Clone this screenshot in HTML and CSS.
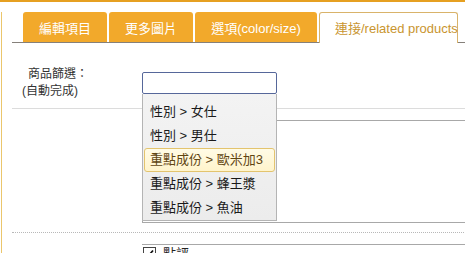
FILE: index.html
```html
<!DOCTYPE html>
<html lang="zh-Hant">
<head>
<meta charset="utf-8">
<title>連接/related products</title>
<link rel="stylesheet" href="styles.css">
</head>
<body>
<div class="page">
  <div class="tabs">
    <div class="tab tab-edit">編輯項目</div>
    <div class="tab tab-photos">更多圖片</div>
    <div class="tab tab-options">選項(color/size)</div>
    <div class="tab tab-related active">連接/related products</div>
  </div>

  <div class="row row-search">
    <div class="label"><span class="label-line first">商品篩選：</span><span class="label-line">(自動完成)</span></div>
    <div class="field">
      <div class="ac">
        <input class="ac-input" type="text">
        <ul class="ac-menu">
          <li class="ac-item">性別 &gt; 女仕</li>
          <li class="ac-item">性別 &gt; 男仕</li>
          <li class="ac-item hover">重點成份 &gt; 歐米加3</li>
          <li class="ac-item">重點成份 &gt; 蜂王漿</li>
          <li class="ac-item">重點成份 &gt; 魚油</li>
        </ul>
      </div>
    </div>
  </div>

  <div class="row row-list">
    <div class="label"></div>
    <div class="field"><div class="listbox"></div></div>
  </div>

  <div class="row row-check">
    <div class="label"></div>
    <div class="field">
      <div class="check-box">
        <span class="cb"><svg width="11" height="11" viewBox="0 0 11 11"><path d="M2 5.5 L4.3 8 L9 2.5" fill="none" stroke="#111" stroke-width="1.8"/></svg></span>
        <span class="cb-text">點評</span>
      </div>
    </div>
  </div>
</div>
</body>
</html>
```

FILE: styles.css
```css
html, body {
  margin: 0;
  padding: 0;
  overflow: hidden;
  background: #fff;
}
body {
  border-top: 2px solid #e6a021;
  font-family: "Liberation Sans", "Noto Sans CJK TC", sans-serif;
  color: #222;
}
.page {
  margin-left: 1px;
  border-left: 1px solid #ebc66c;
  min-height: 260px;
  width: 600px;
}
.tabs {
  display: flex;
  gap: 2px;
  margin: 10px 0 0 10px;
  padding-left: 11px;
  border-bottom: 1px solid #85807a;
  height: 30px;
}
.tab {
  box-sizing: border-box;
  height: 30px;
  padding-top: 4px;
  line-height: 26px;
  font-size: 13px;
  color: #fff;
  background: #f2a92b;
  border-radius: 3px 3px 0 0;
  text-align: center;
  white-space: nowrap;
}
.tab-edit { width: 84px; }
.tab-photos { width: 84px; }
.tab-options { width: 122px; }
.tab-related { width: 139px; }
.tab.active {
  height: 31px;
  background: #fff;
  color: #c9952f;
  border: 1px solid #d9b36a;
  border-bottom: none;
  padding-top: 3px;
  padding-left: 15px;
  text-align: left;
}
.row {
  display: flex;
  margin-left: 10px;
}
.label {
  width: 130px;
  flex: none;
  font-size: 12px;
  line-height: 17px;
  color: #333;
  padding-left: 10px;
  box-sizing: border-box;
}
.label-line { display: block; }
.label-line.first { padding-left: 6px; }
.field { flex: none; }
.row-search {
  padding: 23px 0 8px;
  border-bottom: 1px solid #dcdcdc;
}
.ac { position: relative; margin-top: 6px; }
.ac-input {
  display: block;
  box-sizing: border-box;
  width: 135px;
  height: 22px;
  margin: 0;
  border: 1px solid #56679a;
  border-radius: 2px;
  background: #fff;
  outline: none;
}
.ac-menu {
  position: absolute;
  left: 0;
  top: 22px;
  z-index: 5;
  box-sizing: border-box;
  width: 135px;
  margin: 0;
  padding: 6px 0 0;
  list-style: none;
  background: linear-gradient(#f3f3f3, #ececec);
  border: 1px solid #b4b4b4;
  border-top: none;
}
.ac-item {
  box-sizing: border-box;
  height: 24px;
  margin: 0 1px;
  padding-left: 5px;
  line-height: 22px;
  font-size: 13px;
  color: #1a1a1a;
  border: 1px solid transparent;
  border-radius: 3px;
  white-space: nowrap;
}
.ac-item.hover {
  background: linear-gradient(#fffbe6, #fff4cc);
  border-color: #e3c46e;
  color: #5f4512;
}
.row-list {
  padding: 11px 0 9px;
  border-bottom: 1px dotted #b8b8b8;
}
.listbox {
  box-sizing: border-box;
  width: 420px;
  height: 103px;
  border: 1px solid #a8a8a8;
}
.row-check { padding-top: 11px; }
.check-box {
  display: flex;
  align-items: center;
  gap: 7px;
  width: 420px;
  padding: 1px;
  border-top: 1px solid #a8a8a8;
  font-size: 13px;
}
.cb {
  box-sizing: border-box;
  width: 13px;
  height: 13px;
  border: 1px solid #444;
  background: #fff;
  display: flex;
  align-items: center;
  justify-content: center;
}
.cb svg { display: block; }
.cb-text { line-height: 15px; }
```
